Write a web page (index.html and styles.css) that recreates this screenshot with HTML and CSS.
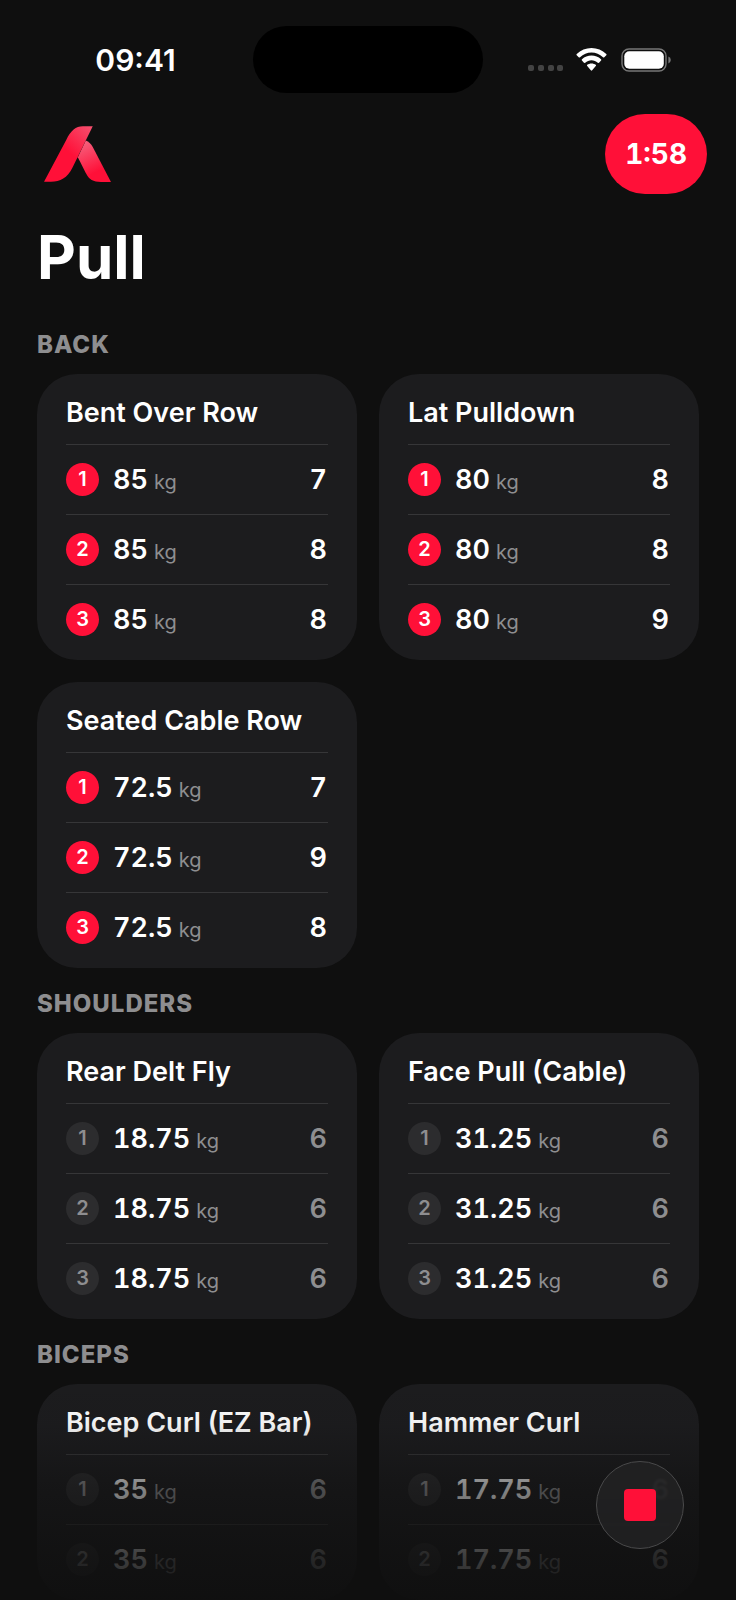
FILE: index.html
```html
<!DOCTYPE html>
<html lang="en">
<head>
<meta charset="utf-8">
<meta name="viewport" content="width=device-width, initial-scale=1">
<title>Pull</title>
<link rel="stylesheet" href="styles.css">
</head>
<body>
<div class="app">
  <div class="status">
    <time class="status-time">09:41</time>
    <div class="island"></div>
    <div class="status-icons">
      <svg class="dots" viewBox="0 0 36 6" aria-hidden="true"><rect width="6" height="6" rx="2"/><rect x="10" width="6" height="6" rx="2"/><rect x="20" width="6" height="6" rx="2"/><rect x="29" width="6" height="6" rx="2"/></svg>
      <svg class="wifi" viewBox="0 0 92 70" aria-hidden="true"><path d="M46 0C63 0 79 7 91 18q2 2 0 4l-6 6q-2 2-4 0C71 19 59 14 46 14S21 19 11 28q-2 2-4 0L1 22q-2-2 0-4C13 7 29 0 46 0Z"/><path d="M46 23c11 0 21 4 29 11q2 2 0 4l-6 7q-2 1-4 0c-5-5-12-8-19-8s-14 3-19 8q-2 1-4 0l-6-7q-2-2 0-4c8-7 18-11 29-11Z"/><path d="M46 47c5 0 10 2 13 4q2 2 0 4L48 68q-2 2-4 0L33 55q-2-2 0-4c3-2 8-4 13-4Z"/></svg>
      <svg class="battery" viewBox="0 0 50 24" aria-hidden="true"><rect x="1" y="1" width="44" height="22" rx="7" fill="none" stroke="#777" stroke-width="1.4"/><rect x="3.3" y="3.2" width="39.5" height="17.6" rx="5" fill="#fff"/><path d="M47.4 8.6q2.4 1 2.4 3.4t-2.4 3.4Z" fill="#777"/></svg>
    </div>
  </div>

  <header class="topbar">
    <svg class="logo" viewBox="131 377 202 169" role="img" aria-label="Logo">
      <defs>
        <linearGradient id="leg-left" gradientUnits="userSpaceOnUse" x1="276" y1="378" x2="205" y2="455"><stop offset="0" stop-color="#f6506f"/><stop offset="1" stop-color="#ff1038"/></linearGradient>
        <linearGradient id="leg-right" gradientUnits="userSpaceOnUse" x1="248" y1="428" x2="290" y2="515"><stop offset="0" stop-color="#f65f7c"/><stop offset="1" stop-color="#ff1038"/></linearGradient>
      </defs>
      <path d="M257 421Q270 426 278 440L333 546H303C279 546 267 539 257 519L233 471Z" fill="url(#leg-right)"/>
      <path d="M131 545L198 419C212 391 227 378 248 378H278L217 502C201 534 180 545 152 545Z" fill="url(#leg-left)"/>
    </svg>
    <button class="timer" type="button">1:58</button>
  </header>

  <main class="workout">
    <h1 class="title">Pull</h1>

    <section class="group">
      <h2 class="group-name">BACK</h2>
      <div class="cards">
        <article class="card">
          <h3 class="card-name">Bent Over Row</h3>
          <ol class="sets">
            <li class="set done"><span class="badge">1</span><span class="load">85<small class="unit">kg</small></span><span class="reps">7</span></li>
            <li class="set done"><span class="badge">2</span><span class="load">85<small class="unit">kg</small></span><span class="reps">8</span></li>
            <li class="set done"><span class="badge">3</span><span class="load">85<small class="unit">kg</small></span><span class="reps">8</span></li>
          </ol>
        </article>
        <article class="card">
          <h3 class="card-name">Lat Pulldown</h3>
          <ol class="sets">
            <li class="set done"><span class="badge">1</span><span class="load">80<small class="unit">kg</small></span><span class="reps">8</span></li>
            <li class="set done"><span class="badge">2</span><span class="load">80<small class="unit">kg</small></span><span class="reps">8</span></li>
            <li class="set done"><span class="badge">3</span><span class="load">80<small class="unit">kg</small></span><span class="reps">9</span></li>
          </ol>
        </article>
        <article class="card">
          <h3 class="card-name">Seated Cable Row</h3>
          <ol class="sets">
            <li class="set done"><span class="badge">1</span><span class="load">72.5<small class="unit">kg</small></span><span class="reps">7</span></li>
            <li class="set done"><span class="badge">2</span><span class="load">72.5<small class="unit">kg</small></span><span class="reps">9</span></li>
            <li class="set done"><span class="badge">3</span><span class="load">72.5<small class="unit">kg</small></span><span class="reps">8</span></li>
          </ol>
        </article>
      </div>
    </section>

    <section class="group">
      <h2 class="group-name">SHOULDERS</h2>
      <div class="cards">
        <article class="card">
          <h3 class="card-name">Rear Delt Fly</h3>
          <ol class="sets">
            <li class="set"><span class="badge">1</span><span class="load">18.75<small class="unit">kg</small></span><span class="reps">6</span></li>
            <li class="set"><span class="badge">2</span><span class="load">18.75<small class="unit">kg</small></span><span class="reps">6</span></li>
            <li class="set"><span class="badge">3</span><span class="load">18.75<small class="unit">kg</small></span><span class="reps">6</span></li>
          </ol>
        </article>
        <article class="card">
          <h3 class="card-name">Face Pull (Cable)</h3>
          <ol class="sets">
            <li class="set"><span class="badge">1</span><span class="load">31.25<small class="unit">kg</small></span><span class="reps">6</span></li>
            <li class="set"><span class="badge">2</span><span class="load">31.25<small class="unit">kg</small></span><span class="reps">6</span></li>
            <li class="set"><span class="badge">3</span><span class="load">31.25<small class="unit">kg</small></span><span class="reps">6</span></li>
          </ol>
        </article>
      </div>
    </section>

    <section class="group">
      <h2 class="group-name">BICEPS</h2>
      <div class="cards">
        <article class="card">
          <h3 class="card-name">Bicep Curl (EZ Bar)</h3>
          <ol class="sets">
            <li class="set"><span class="badge">1</span><span class="load">35<small class="unit">kg</small></span><span class="reps">6</span></li>
            <li class="set"><span class="badge">2</span><span class="load">35<small class="unit">kg</small></span><span class="reps">6</span></li>
          </ol>
        </article>
        <article class="card">
          <h3 class="card-name">Hammer Curl</h3>
          <ol class="sets">
            <li class="set"><span class="badge">1</span><span class="load">17.75<small class="unit">kg</small></span><span class="reps">6</span></li>
            <li class="set"><span class="badge">2</span><span class="load">17.75<small class="unit">kg</small></span><span class="reps">6</span></li>
          </ol>
        </article>
      </div>
    </section>
  </main>

  <div class="fade"></div>
  <button class="stop" type="button" aria-label="Stop workout"><span class="stop-mark"></span></button>
</div>
</body>
</html>
```
FILE: styles.css
```css
* { box-sizing: border-box; }

body {
  margin: 0;
  background: #0f0f0f;
  color: #fff;
  font-family: Inter, "Liberation Sans", sans-serif;
}

.app {
  position: relative;
  display: flex;
  flex-direction: column;
  height: 100vh;
  overflow: hidden;
}

.status {
  display: grid;
  grid-template-columns: 1fr 230px 1fr;
  align-items: center;
  padding-top: 26px;
}
.status-time {
  padding-left: 18px;
  text-align: center;
  font-size: 30px;
  line-height: 36px;
  font-weight: 600;
}
.island { height: 67px; border-radius: 34px; background: #000; }
.status-icons { display: flex; align-items: center; padding-left: 45px; }
.dots { width: 36px; height: 6px; margin: 16px 12px 0 0; fill: #434343; }
.wifi { width: 31px; height: 23px; margin-right: 14px; fill: #fff; }
.battery { width: 50px; height: 24px; }

.topbar {
  display: flex;
  justify-content: space-between;
  align-items: center;
  padding: 21px 29px 0 44px;
}
.logo { width: 67px; height: 56px; }
.timer {
  height: 80px;
  padding: 0 20px;
  border: 0;
  border-radius: 40px;
  background: #ff1038;
  color: #fff;
  font: inherit;
  font-size: 28px;
  font-weight: 700;
  font-variant-numeric: tabular-nums;
}

.workout {
  flex: 1;
  min-height: 0;
  overflow-y: auto;
  scrollbar-width: none;
  padding: 27px 37px 0;
}
.title {
  margin: 0 0 16px;
  font-size: 60px;
  line-height: 72px;
  font-weight: 700;
}
.group { padding-top: 24px; }
.group-name {
  margin: 0 0 17px;
  color: #8e8e90;
  font-size: 24px;
  line-height: 24px;
  font-weight: 800;
  letter-spacing: 1px;
}
.cards {
  display: grid;
  grid-template-columns: 1fr 1fr;
  gap: 22px;
}
.card {
  padding: 0 29px 6px;
  border-radius: 40px;
  background: #1c1c1e;
}
.card-name {
  margin: 0;
  padding-top: 8px;
  font-size: 27px;
  line-height: 62px;
  font-weight: 600;
  white-space: nowrap;
}
.sets { margin: 0; padding: 0; list-style: none; }
.set {
  display: flex;
  align-items: center;
  height: 70px;
  border-top: 1px solid #363638;
}
.badge {
  width: 33px;
  height: 33px;
  margin-right: 14px;
  border-radius: 50%;
  background: #2c2c2e;
  color: #8e8e90;
  font-size: 20px;
  line-height: 33px;
  font-weight: 600;
  text-align: center;
}
.load, .reps {
  font-size: 27px;
  line-height: 32px;
  font-weight: 600;
  font-variant-numeric: tabular-nums;
}
.unit {
  margin-left: 6px;
  color: #8e8e90;
  font-size: 20px;
  line-height: 20px;
  font-weight: 400;
}
.reps { margin-left: auto; padding-right: 1px; color: #8e8e90; }
.done .badge { background: #ff1038; color: #fff; }
.done .reps { color: #fff; }

.fade {
  position: absolute;
  inset: auto 0 0;
  height: 220px;
  background: linear-gradient(rgba(15, 15, 15, 0), rgba(15, 15, 15, .06) 20%, rgba(15, 15, 15, .5) 48%, rgba(15, 15, 15, .8) 80%, rgba(15, 15, 15, .94));
  pointer-events: none;
}
.stop {
  position: absolute;
  right: 52px;
  bottom: 51px;
  display: grid;
  place-items: center;
  width: 88px;
  height: 88px;
  padding: 0;
  border: 1px solid #4a4a4b;
  border-radius: 50%;
  background: rgba(34, 34, 35, .86);
  backdrop-filter: blur(1px);
}
.stop-mark { width: 32px; height: 32px; border-radius: 4px; background: #ff1038; }
```
